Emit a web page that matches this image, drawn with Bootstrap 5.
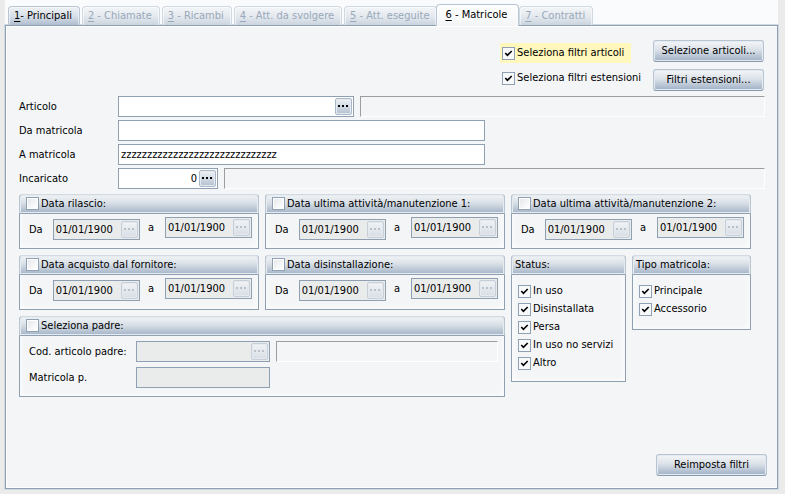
<!DOCTYPE html>
<html lang="it">
<head>
<meta charset="utf-8">
<meta name="viewport" content="width=device-width, initial-scale=1">
<title>Matricole</title>
<link rel="stylesheet" href="https://cdn.jsdelivr.net/npm/bootstrap@5.3.0/dist/css/bootstrap.min.css">
<style>
:root { --edge: #8fa0b2; --face: #f3f5f7; }
body { font: 11px/14px Tahoma, "DejaVu Sans Condensed", "Noto Sans", sans-serif; color: #000; background: #ebebeb; padding: 0 7px 5px 5px; }
input, button { font: inherit; color: inherit; }
.strip { background: #f9fbfc; padding: 4px 0 0 3px; border: 0; gap: 2px; height: 25px; align-items: flex-end; flex-wrap: nowrap; }
.strip .nav-link { height: 19px; padding: 0 7px 0 5px; margin: 0; color: #000; border: 1px solid #b9c5d2; border-bottom: 0; border-radius: 4px 4px 0 0; box-shadow: inset 1px 1px #fff8, inset -1px 0 #fff8; background: linear-gradient(#eef2f6, #d5dde7 55%, #aebdce); white-space: nowrap; text-align: left; }
.strip .nav-link:disabled { color: #99a8ba; border-color: #d0d8e0; background: linear-gradient(#f3f6f8, #e3e8ee 55%, #cbd4de); }
.strip .nav-link.active, .strip .nav-link.active:hover { height: 22px; margin: 0 -2px -1px -3px; padding: 0 11px 1px 8px; color: #000; background: linear-gradient(#fdfefe, var(--face)); border-color: #b9c5d2; position: relative; z-index: 1; }
.strip u { text-underline-offset: 2px; }
.sheet { background: var(--face); border: 1px solid var(--edge); box-shadow: inset 0 1px #fff, inset 1px -1px #fff, 0 0 0 1px #d0dae2; padding: 14px 10px 12px 13px; min-height: 464px; }
.cmd { width: 111px; height: 22px; padding: 0; line-height: 18px; border: 1px solid #b7c4d1; border-bottom-color: #8799ae; border-radius: 3px; box-shadow: inset 0 0 0 1px #e4eaf0; background: linear-gradient(#f4f6f8, #dbe1e8 45%, #9fb0c6); }
.tick { appearance: none; flex: none; width: 13px; height: 13px; margin: 0; border: 1px solid var(--edge); background: linear-gradient(135deg, #e6e9ec, #fff) center / 9px 9px no-repeat #fff; }
.tick:checked { background: url("data:image/svg+xml,%3Csvg xmlns='http://www.w3.org/2000/svg' viewBox='0 0 11 11'%3E%3Cpath d='M2.3 5L4.4 7.4L8.7 3' fill='none' stroke='%23000' stroke-width='1.6'/%3E%3C/svg%3E") center / 11px 11px no-repeat #f8f9fa; }
.opt { display: flex; align-items: center; gap: 2px; white-space: nowrap; }
.top-opt { height: 20px; padding-left: 2px; width: 131px; }
.lit { background: #fff7bb; }
.top-area { display: flex; justify-content: flex-end; gap: 22px; padding-right: 3px; }
.top-checks { display: grid; gap: 5px; align-content: start; padding-top: 3px; }
.top-cmds { display: grid; gap: 7px; }
.lines { display: grid; gap: 3px; margin: 5px 2px 0 0; }
.line { display: grid; grid-template-columns: 99px 1fr; align-items: center; }
.lookup { display: flex; gap: 6px; }
.field { display: flex; align-items: center; height: 21px; border: 1px solid var(--edge); background: #fff; padding-right: 1px; }
.field input { flex: 1 1 0; min-width: 0; border: 0; background: none; padding: 0 2px; height: 19px; outline-offset: -1px; }
.field.off { background: #eaebeb; }
.w-code { width: 236px; }
.w-long { width: 367px; }
.w-num { width: 100px; }
.w-date { width: 87px; }
.w-parent { width: 134px; }
.readout { flex: 1; height: 21px; border: 1px solid; border-color: #9c9ea1 #fff #fff #9c9ea1; }
.dots { flex: none; display: grid; place-items: center; width: 17px; height: 17px; padding: 0; border: 1px solid #aab9c9; border-radius: 2px; box-shadow: inset 0 0 0 1px #e4eaf0; background: linear-gradient(#f0f3f6, #b4c1d1); }
.dots svg { display: block; fill: #000; }
.off .dots { border-color: #c6ced8; background: linear-gradient(#f1f3f5, #d8dee6); }
.off .dots svg { fill: #b9c1cb; }
.groups { display: grid; grid-template-columns: repeat(3, 1fr); gap: 6px; margin-top: 5px; align-items: start; }
.group { border: 1px solid var(--edge); border-top: 0; border-radius: 4px 4px 0 0; min-width: 0; margin: 0; background: var(--face); box-shadow: inset 0 0 7px #fff; }
.group-head { height: 20px; margin: 0 -1px; padding: 0 3px 1px; border: 1px solid #b9c5d1; border-top-color: #d3dae1; border-bottom-color: var(--edge); border-radius: 4px 4px 0 0; background: linear-gradient(#f1f4f6, #d8dfe6 45%, #a4b4c8); box-shadow: inset 0 0 0 1px #e6ebf0; }
.group-head .opt { padding-left: 3px; height: 17px; }
.dates { display: flex; align-items: flex-start; justify-content: space-between; padding: 3px 6px 0 9px; height: 34px; }
.dates label { display: flex; align-items: center; }
.date-from { margin-top: 2px; gap: 10px; }
.date-to { gap: 11px; }
.pair { grid-column: span 2; }
.third { display: grid; grid-template-columns: 115px 1fr; gap: 6px; grid-column: 3; grid-row: 2 / span 2; align-items: start; }
.checks { display: grid; gap: 4px; padding: 9px 6px 11px; }
.checks .opt { height: 14px; }
.kind { padding-bottom: 13px; }
.parent { padding: 5px 6px 8px 9px; display: grid; gap: 5px; }
.parent .line { grid-template-columns: 107px 1fr; }
</style>
</head>
<body>
<svg width="0" height="0" class="position-absolute" aria-hidden="true"><symbol id="dots" viewBox="0 0 11 3"><rect x="0" y="0" width="2" height="2"/><rect x="4" y="0" width="2" height="2"/><rect x="8" y="0" width="2" height="2"/></symbol></svg>
<ul class="nav nav-tabs strip">
  <li class="nav-item"><button type="button" class="nav-link"><u>1</u>- Principali</button></li>
  <li class="nav-item"><button type="button" class="nav-link" disabled><u>2</u> - Chiamate</button></li>
  <li class="nav-item"><button type="button" class="nav-link" disabled><u>3</u> - Ricambi</button></li>
  <li class="nav-item"><button type="button" class="nav-link" disabled><u>4</u> - Att. da svolgere</button></li>
  <li class="nav-item"><button type="button" class="nav-link" disabled><u>5</u> - Att. eseguite</button></li>
  <li class="nav-item"><button type="button" class="nav-link active"><u>6</u> - Matricole</button></li>
  <li class="nav-item"><button type="button" class="nav-link" disabled><u>7</u> - Contratti</button></li>
</ul>
<main class="sheet d-flex flex-column">
  <div class="top-area">
    <div class="top-checks">
      <label class="opt top-opt lit"><input type="checkbox" class="tick" checked>Seleziona filtri articoli</label>
      <label class="opt top-opt"><input type="checkbox" class="tick" checked>Seleziona filtri estensioni</label>
    </div>
    <div class="top-cmds">
      <button type="button" class="cmd">Selezione articoli...</button>
      <button type="button" class="cmd">Filtri estensioni...</button>
    </div>
  </div>
  <div class="lines">
    <div class="line"><label for="art">Articolo</label><div class="lookup"><div class="field w-code"><input id="art" type="text"><button type="button" class="dots" aria-label="Cerca articolo"><svg width="11" height="3"><use href="#dots"/></svg></button></div><output class="readout"></output></div></div>
    <div class="line"><label for="from">Da matricola</label><div class="field w-long"><input id="from" type="text"></div></div>
    <div class="line"><label for="to">A matricola</label><div class="field w-long"><input id="to" type="text" value="zzzzzzzzzzzzzzzzzzzzzzzzzzzzzz"></div></div>
    <div class="line"><label for="inc">Incaricato</label><div class="lookup"><div class="field w-num"><input id="inc" type="text" class="text-end" value="0"><button type="button" class="dots" aria-label="Cerca incaricato"><svg width="11" height="3"><use href="#dots"/></svg></button></div><output class="readout"></output></div></div>
  </div>
  <div class="groups me-3">
    <section class="group">
      <div class="group-head"><label class="opt"><input type="checkbox" class="tick">Data rilascio:</label></div>
      <div class="dates"><label class="date-from">Da<span class="field off w-date"><input type="text" value="01/01/1900" readonly><button type="button" class="dots" disabled aria-label="Calendario"><svg width="11" height="3"><use href="#dots"/></svg></button></span></label><label class="date-to">a<span class="field off w-date"><input type="text" value="01/01/1900" readonly><button type="button" class="dots" disabled aria-label="Calendario"><svg width="11" height="3"><use href="#dots"/></svg></button></span></label></div>
    </section>
    <section class="group">
      <div class="group-head"><label class="opt"><input type="checkbox" class="tick">Data ultima attività/manutenzione 1:</label></div>
      <div class="dates"><label class="date-from">Da<span class="field off w-date"><input type="text" value="01/01/1900" readonly><button type="button" class="dots" disabled aria-label="Calendario"><svg width="11" height="3"><use href="#dots"/></svg></button></span></label><label class="date-to">a<span class="field off w-date"><input type="text" value="01/01/1900" readonly><button type="button" class="dots" disabled aria-label="Calendario"><svg width="11" height="3"><use href="#dots"/></svg></button></span></label></div>
    </section>
    <section class="group">
      <div class="group-head"><label class="opt"><input type="checkbox" class="tick">Data ultima attività/manutenzione 2:</label></div>
      <div class="dates"><label class="date-from">Da<span class="field off w-date"><input type="text" value="01/01/1900" readonly><button type="button" class="dots" disabled aria-label="Calendario"><svg width="11" height="3"><use href="#dots"/></svg></button></span></label><label class="date-to">a<span class="field off w-date"><input type="text" value="01/01/1900" readonly><button type="button" class="dots" disabled aria-label="Calendario"><svg width="11" height="3"><use href="#dots"/></svg></button></span></label></div>
    </section>
    <section class="group">
      <div class="group-head"><label class="opt"><input type="checkbox" class="tick">Data acquisto dal fornitore:</label></div>
      <div class="dates"><label class="date-from">Da<span class="field off w-date"><input type="text" value="01/01/1900" readonly><button type="button" class="dots" disabled aria-label="Calendario"><svg width="11" height="3"><use href="#dots"/></svg></button></span></label><label class="date-to">a<span class="field off w-date"><input type="text" value="01/01/1900" readonly><button type="button" class="dots" disabled aria-label="Calendario"><svg width="11" height="3"><use href="#dots"/></svg></button></span></label></div>
    </section>
    <section class="group">
      <div class="group-head"><label class="opt"><input type="checkbox" class="tick">Data disinstallazione:</label></div>
      <div class="dates"><label class="date-from">Da<span class="field off w-date"><input type="text" value="01/01/1900" readonly><button type="button" class="dots" disabled aria-label="Calendario"><svg width="11" height="3"><use href="#dots"/></svg></button></span></label><label class="date-to">a<span class="field off w-date"><input type="text" value="01/01/1900" readonly><button type="button" class="dots" disabled aria-label="Calendario"><svg width="11" height="3"><use href="#dots"/></svg></button></span></label></div>
    </section>
    <div class="third">
      <section class="group">
        <div class="group-head d-flex align-items-center">Status:</div>
        <div class="checks">
          <label class="opt"><input type="checkbox" class="tick" checked>In uso</label>
          <label class="opt"><input type="checkbox" class="tick" checked>Disinstallata</label>
          <label class="opt"><input type="checkbox" class="tick" checked>Persa</label>
          <label class="opt"><input type="checkbox" class="tick" checked>In uso no servizi</label>
          <label class="opt"><input type="checkbox" class="tick" checked>Altro</label>
        </div>
      </section>
      <section class="group">
        <div class="group-head d-flex align-items-center">Tipo matricola:</div>
        <div class="checks kind">
          <label class="opt"><input type="checkbox" class="tick" checked>Principale</label>
          <label class="opt"><input type="checkbox" class="tick" checked>Accessorio</label>
        </div>
      </section>
    </div>
    <section class="group pair">
      <div class="group-head"><label class="opt"><input type="checkbox" class="tick">Seleziona padre:</label></div>
      <div class="parent">
        <div class="line"><label for="cod">Cod. articolo padre:</label><div class="lookup"><div class="field off w-parent"><input id="cod" type="text" readonly><button type="button" class="dots" disabled aria-label="Cerca articolo padre"><svg width="11" height="3"><use href="#dots"/></svg></button></div><output class="readout"></output></div></div>
        <div class="line"><label for="mat">Matricola p.</label><div class="field off w-parent"><input id="mat" type="text" readonly></div></div>
      </div>
    </section>
  </div>
  <button type="button" class="cmd mt-auto ms-auto">Reimposta filtri</button>
</main>
<script src="https://cdn.jsdelivr.net/npm/bootstrap@5.3.0/dist/js/bootstrap.bundle.min.js"></script>
</body>
</html>
